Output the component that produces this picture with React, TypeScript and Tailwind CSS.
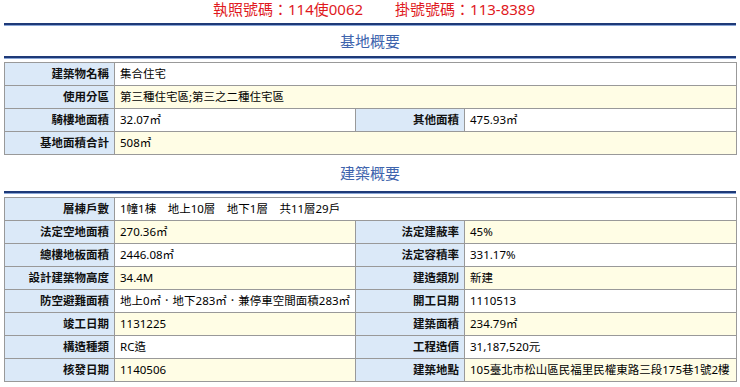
const FONT = "font-['Noto_Sans','Noto_Sans_CJK_TC',sans-serif]";

type Row = { label: string; value: string; label2?: string; value2?: string };

const siteRows: Row[] = [
  { label: "建築物名稱", value: "集合住宅" },
  { label: "使用分區", value: "第三種住宅區;第三之二種住宅區" },
  { label: "騎樓地面積", value: "32.07㎡", label2: "其他面積", value2: "475.93㎡" },
  { label: "基地面積合計", value: "508㎡" },
];

const buildRows: Row[] = [
  { label: "層棟戶數", value: "1幢1棟\u3000地上10層\u3000地下1層\u3000共11層29戶" },
  { label: "法定空地面積", value: "270.36㎡", label2: "法定建蔽率", value2: "45%" },
  { label: "總樓地板面積", value: "2446.08㎡", label2: "法定容積率", value2: "331.17%" },
  { label: "設計建築物高度", value: "34.4M", label2: "建造類別", value2: "新建" },
  { label: "防空避難面積", value: "地上0㎡．地下283㎡．兼停車空間面積283㎡", label2: "開工日期", value2: "1110513" },
  { label: "竣工日期", value: "1131225", label2: "建築面積", value2: "234.79㎡" },
  { label: "構造種類", value: "RC造", label2: "工程造價", value2: "31,187,520元" },
  { label: "核發日期", value: "1140506", label2: "建築地點", value2: "105臺北市松山區民福里民權東路三段175巷1號2樓" },
];

function Rule() {
  return <div className="mx-[4px] border-t-2 border-b border-t-[#1e3a78] border-b-[#8aa6d6]" />;
}

function InfoTable({ rows }: { rows: Row[] }) {
  const label = "h-[23px] p-0 border border-[#999] bg-[#dbe9f8] pr-[5px] text-right font-semibold text-[#111] whitespace-nowrap";
  return (
    <table className="mx-[4px] mt-[3px] w-[733px] table-fixed border-collapse border border-[#888] text-[11.5px] leading-[16px] text-black">
      <colgroup>
        <col className="w-[110px]" />
        <col className="w-[241px]" />
        <col className="w-[109px]" />
        <col />
      </colgroup>
      <tbody>
        {rows.map((r, i) => {
          const val = `h-[23px] p-0 pl-[5px] border border-[#999] whitespace-nowrap ${i % 2 === 1 ? "bg-[#fffde5]" : "bg-white"}`;
          return (
            <tr key={r.label}>
              <td className={label}>{r.label}</td>
              {r.label2 ? (
                <>
                  <td className={val}>{r.value}</td>
                  <td className={label}>{r.label2}</td>
                  <td className={val}>{r.value2}</td>
                </>
              ) : (
                <td colSpan={3} className={val}>{r.value}</td>
              )}
            </tr>
          );
        })}
      </tbody>
    </table>
  );
}

export default function App() {
  return (
    <div className={`w-[740px] h-[387px] bg-white overflow-hidden ${FONT}`}>
      <div className="h-[23px] flex items-start justify-center gap-[32px] pt-[2px] pl-[8px] text-[15px] leading-none text-[#e0191e]">
        <span>執照號碼：114使0062</span>
        <span>掛號號碼：113-8389</span>
      </div>
      <Rule />
      <div className="h-[30px] flex items-center justify-center text-[15px] leading-none text-[#3e64ad]">基地概要</div>
      <Rule />
      <InfoTable rows={siteRows} />
      <div className="h-[36px] flex items-center justify-center text-[15px] leading-none text-[#3e64ad]">建築概要</div>
      <Rule />
      <InfoTable rows={buildRows} />
    </div>
  );
}
